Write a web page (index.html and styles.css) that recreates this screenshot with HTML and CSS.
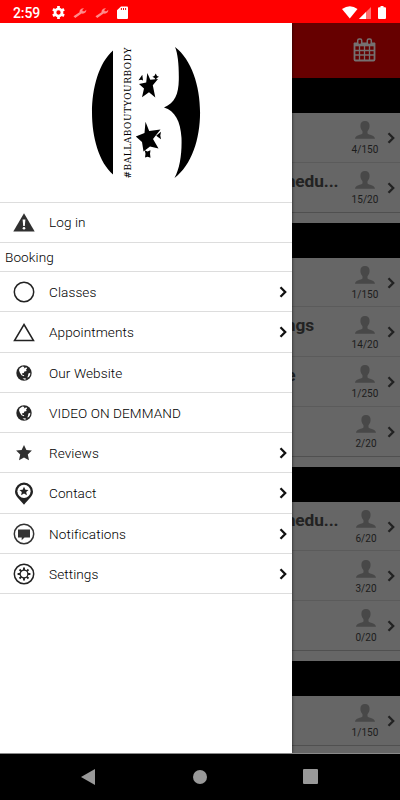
FILE: index.html
```html
<!DOCTYPE html>
<html lang="en">
<head>
<meta charset="utf-8">
<title>Booking menu</title>
<link rel="stylesheet" href="styles.css">
</head>
<body>
<svg class="defs" width="0" height="0" aria-hidden="true">
  <symbol id="chev" viewBox="0 0 8 12"><path d="M1.500 1.300 6.200 6 1.500 10.700" fill="none" stroke="currentColor" stroke-width="2.300"/></symbol>
  <symbol id="person" viewBox="0 0 20 18"><path d="M10 0C7 0 5.400 1.800 5.400 4.800c0 2 .8 4 2.100 5.400v2.200C6.500 14 .3 13.600 0 17.800h20c-.3-4.200-6.500-3.800-7.500-5.400v-2.200c1.300-1.400 2.100-3.400 2.100-5.400C14.600 1.800 13 0 10 0Z" fill="currentColor"/></symbol>
  <symbol id="star" viewBox="0 0 16 16"><path d="m8 0 2.400 5 5.500.6-4.100 3.800 1.200 5.900L8 12.500l-5 2.800 1.200-5.900L.1 5.600 5.600 5Z" fill="#303030"/></symbol>
  <symbol id="globe" viewBox="0 0 16 16"><circle cx="8" cy="8" r="7.700" fill="#252525"/><path d="M3.500 3.400 6.400 1.600l2 .3-.6 1.500 2.700-1.200.6 1.400-1.200 1.100.9 1.300-2.400.6-.6 1.500-2 .4.6 1.200 1.800.5-.2 1-2.500-1L3.800 7.500 3 5.200ZM12.400 8.400l1.900-.6-.2 2.200-1.300 1.900-1.500.5.7-1.600ZM6.500 13.500l2.500-.3 1.400.7-1.600.8Z" fill="#fff"/></symbol>
  <symbol id="wrench" viewBox="0 0 14 12"><path d="M.5 9.300 6.500 5.200C6.200 2.800 8 1.100 11 1.200L9.300 2.900l.5 1.300 1.800.1 1.700-1.500c.2 2.600-1.800 4.300-4.700 3.800L2.200 11Z" fill="#ff8b8b"/></symbol>
</svg>
<div class="phone">
  <header class="status">
    <span class="clock">2:59</span>
    <svg class="s-gear" width="13" height="13" viewBox="0 0 13 13"><circle cx="6.500" cy="6.500" r="3.500" fill="none" stroke="#fff" stroke-width="2.700"/><path d="M6.500 0v2.500M6.500 10.500V13M.9 3.250l2.100 1.250M10 8.500l2.100 1.250M.9 9.750 3 8.500M10 4.500l2.100-1.250" stroke="#fff" stroke-width="2.700"/></svg>
    <svg class="s-wr" width="14" height="12"><use href="#wrench"/></svg>
    <svg class="s-wr" width="14" height="12"><use href="#wrench"/></svg>
    <svg class="s-sd" width="11" height="13" viewBox="0 0 11 13"><path d="M4 .4h6q1 0 1 1V12q0 1-1 1H1q-1 0-1-1V4.200Z" fill="#fff"/><path d="M4.400 2v2M6.500 2v2M8.600 2v2" stroke="#f00" stroke-width="1"/></svg>
    <svg class="s-wifi" width="16" height="13" viewBox="0 0 16 13"><path d="M0 3Q8-2.500 15.500 3L7.800 12.500Z" fill="#fff"/></svg>
    <svg class="s-cell" width="12" height="12" viewBox="0 0 12 12"><path d="M12 0v12H0Z" fill="#ff7070"/><path d="M7 5v7H0Z" fill="#fff"/></svg>
    <svg class="s-bat" width="8" height="13" viewBox="0 0 8 13"><path d="M2.500 0h3v1.300H7q1 0 1 1V12q0 1-1 1H1q-1 0-1-1V2.300q0-1 1-1h1.500Z" fill="#fff"/></svg>
  </header>
  <main class="stage">
    <section class="schedule">
      <div class="appbar">
        <svg width="23" height="24" viewBox="0 0 23 24"><path d="M1.500 6h20v15.500q0 1-1 1h-18q-1 0-1-1Z" fill="none" stroke="#757070" stroke-width="1.800"/><path d="M1 4.500h21v3.800H1Z" fill="#757070"/><path d="M2 12.500h19M2 17h19M6.500 8v14M11.500 8v14M16.500 8v14" stroke="#757070" stroke-width="1.300"/><rect x="4.700" y="1" width="4" height="5.500" rx="1.500" fill="#600" stroke="#757070" stroke-width="1.500"/><rect x="14.300" y="1" width="4" height="5.500" rx="1.500" fill="#600" stroke="#757070" stroke-width="1.500"/></svg>
      </div>
      <div class="day"></div>
      <div class="group">
        <div class="slot"><span class="name"></span><span class="count"><svg width="20" height="18"><use href="#person"/></svg>4/150</span><svg class="go" width="8" height="12"><use href="#chev"/></svg></div>
        <div class="slot"><span class="name">Schedu...</span><span class="count"><svg width="20" height="18"><use href="#person"/></svg>15/20</span><svg class="go" width="8" height="12"><use href="#chev"/></svg></div>
      </div>
      <div class="day"></div>
      <div class="group">
        <div class="slot"><span class="name"></span><span class="count"><svg width="20" height="18"><use href="#person"/></svg>1/150</span><svg class="go" width="8" height="12"><use href="#chev"/></svg></div>
        <div class="slot"><span class="name n2">ngs</span><span class="count"><svg width="20" height="18"><use href="#person"/></svg>14/20</span><svg class="go" width="8" height="12"><use href="#chev"/></svg></div>
        <div class="slot"><span class="name n3">e</span><span class="count"><svg width="20" height="18"><use href="#person"/></svg>1/250</span><svg class="go" width="8" height="12"><use href="#chev"/></svg></div>
        <div class="slot short"><span class="name"></span><span class="count"><svg width="20" height="18"><use href="#person"/></svg>2/20</span><svg class="go" width="8" height="12"><use href="#chev"/></svg></div>
      </div>
      <div class="day"></div>
      <div class="group">
        <div class="slot short"><span class="name">Schedu...</span><span class="count"><svg width="20" height="18"><use href="#person"/></svg>6/20</span><svg class="go" width="8" height="12"><use href="#chev"/></svg></div>
        <div class="slot short"><span class="name"></span><span class="count"><svg width="20" height="18"><use href="#person"/></svg>3/20</span><svg class="go" width="8" height="12"><use href="#chev"/></svg></div>
        <div class="slot short"><span class="name"></span><span class="count"><svg width="20" height="18"><use href="#person"/></svg>0/20</span><svg class="go" width="8" height="12"><use href="#chev"/></svg></div>
      </div>
      <div class="day"></div>
      <div class="group">
        <div class="slot"><span class="name"></span><span class="count"><svg width="20" height="18"><use href="#person"/></svg>1/150</span><svg class="go" width="8" height="12"><use href="#chev"/></svg></div>
      </div>
    </section>
    <nav class="drawer">
      <div class="brand">
        <svg width="112" height="136" viewBox="90 45 112 136">
          <path d="M113 50.500C85 75 85 150 113 174.500ZM175 47C208 72 209 152 174.500 178 180 168 182 153 181.500 138 180.500 121 175 111 164 107.500 175 103 178.500 94 178.800 80 179 66 178 54 175 47Z" fill="#000"/>
          <text transform="translate(130.500 178.500) rotate(-90)" textLength="131" lengthAdjust="spacing" class="tag">#BALLABOUTYOURBODY</text>
          <path d="m147.300 73 3 6.700 7.700-.8-5.200 6.300 2.500 12.300-6.300-5.200-7 5 2-8.800-5-4.500 7.200-1.500ZM145.500 121.700l3.700 9.300 11.300-1.500-7.500 9.500 5.500 9.500-8.500-2-6.500 5-1.500-9.500-6.200-5.500 8.700-3.500Z" fill="#000"/>
          <path d="M155.700 73.500q.6 2.600 3.300 3.300-2.700.8-3.300 3.300-.6-2.500-3.300-3.300 2.700-.7 3.300-3.300ZM142.300 74.800l.7 5.700-1.800-.8-2.700.6ZM161 131.700l-.7 3.700.7 3.800-4.800-3.400ZM144.700 150.300l2.800 1.200 3-1.200-.5 3.500.5 4-2.800-1-2.700.8.500-3.800Z" fill="#000"/>
        </svg>
      </div>
      <a class="item"><span class="ico"><svg width="22" height="19" viewBox="0 0 22 19"><path d="M11 .3 21.700 18.500H.3Z" fill="#303030"/><path d="M9.600 6.500h2.800l-.6 6.500h-1.600Z" fill="#fff"/><circle cx="11" cy="15.200" r="1.300" fill="#fff"/></svg></span>Log in</a>
      <h2 class="heading">Booking</h2>
      <a class="item"><span class="ico"><svg width="22" height="22" viewBox="0 0 22 22"><circle cx="11" cy="11" r="9.700" fill="none" stroke="#222" stroke-width="1.500"/></svg></span>Classes<svg class="go" width="8" height="12"><use href="#chev"/></svg></a>
      <a class="item"><span class="ico"><svg width="22" height="19" viewBox="0 0 22 19"><path d="M11 1.500 20.500 17.500h-19Z" fill="none" stroke="#222" stroke-width="1.500"/></svg></span>Appointments<svg class="go" width="8" height="12"><use href="#chev"/></svg></a>
      <a class="item"><span class="ico"><svg width="16" height="16"><use href="#globe"/></svg></span>Our Website</a>
      <a class="item"><span class="ico"><svg width="16" height="16"><use href="#globe"/></svg></span>VIDEO ON DEMMAND</a>
      <a class="item"><span class="ico"><svg width="16" height="16"><use href="#star"/></svg></span>Reviews<svg class="go" width="8" height="12"><use href="#chev"/></svg></a>
      <a class="item"><span class="ico"><svg width="20" height="23" viewBox="0 0 20 23"><path d="M10 .5A9 9 0 0 0 1 9.500C1 14.500 5.500 17 10 22.700 14.500 17 19 14.500 19 9.500A9 9 0 0 0 10 .5Z" fill="#222"/><circle cx="10" cy="9.300" r="6.600" fill="#fff"/><path d="m10 4.800 1.400 2.900 3.100.2-2.300 2.200.7 3.200-2.900-1.700-2.900 1.700.7-3.200-2.300-2.200 3.100-.2Z" fill="#222"/></svg></span>Contact<svg class="go" width="8" height="12"><use href="#chev"/></svg></a>
      <a class="item"><span class="ico"><svg width="22" height="22" viewBox="0 0 22 22"><circle cx="11" cy="11" r="9.700" fill="none" stroke="#333" stroke-width="1.500"/><path d="M5 6.500h12v8h-5.500l-2.800 2.800v-2.800H5Z" fill="#333"/></svg></span>Notifications<svg class="go" width="8" height="12"><use href="#chev"/></svg></a>
      <a class="item"><span class="ico"><svg width="22" height="22" viewBox="0 0 22 22"><circle cx="11" cy="11" r="9.700" fill="none" stroke="#222" stroke-width="1.500"/><circle cx="11" cy="11" r="3.900" fill="none" stroke="#222" stroke-width="1.300"/><path d="M11 4.600v2.500M11 14.900v2.500M4.600 11h2.500M14.900 11h2.500M6.500 6.500l1.700 1.700M13.800 13.800l1.700 1.700M6.500 15.500l1.700-1.700M13.800 8.200l1.700-1.700" stroke="#222" stroke-width="1.900"/></svg></span>Settings<svg class="go" width="8" height="12"><use href="#chev"/></svg></a>
    </nav>
  </main>
  <footer class="keys">
    <svg width="14" height="16" viewBox="0 0 14 16"><path d="M14 0v16L0 8Z" fill="#999"/></svg>
    <svg class="home" width="14" height="14" viewBox="0 0 14 14"><circle cx="7" cy="7" r="7" fill="#999"/></svg>
    <svg width="15" height="15" viewBox="0 0 15 15"><rect width="15" height="15" rx="1" fill="#999"/></svg>
  </footer>
</div>
</body>
</html>
```
FILE: styles.css
```css
* { box-sizing: border-box; }
body { margin: 0; font-family: Roboto, "Liberation Sans", sans-serif; }
svg { display: block; flex: none; }
.defs { position: absolute; }
.phone { display: flex; flex-direction: column; width: 400px; height: 800px; overflow: hidden; background: #000; }

.status { display: flex; align-items: center; height: 23px; padding: 2px 14px 0 13px; background: #f00; color: #fff; flex: none; }
.clock { width: 38.5px; font-size: 14px; font-weight: 500; line-height: 20px; letter-spacing: -.1px; }
.s-wr, .s-sd { margin-left: 8px; }
.s-wifi { margin-left: auto; }
.s-cell { margin-left: 1px; margin-top: 1px; }
.s-bat { margin-left: 7px; }

.stage { position: relative; height: 730.5px; overflow: hidden; flex: none; background: #666; border-bottom: 1px solid #8a8a8a; }
.appbar { height: 55px; padding: 15px 24px 0 0; display: flex; justify-content: flex-end; background: #600; }
.day { height: 35px; background: #000; }
.group { padding-bottom: 10px; }
.slot { display: flex; height: 49.75px; padding-right: 5px; border-bottom: 1px solid #5b5b5b; align-items: flex-start; }
.slot:last-child { border-bottom: 1px solid #505050; }
.name { width: 338.5px; padding-top: 8px; font-size: 17.3px; line-height: 20px; font-weight: 700; letter-spacing: -.1px; color: #222; text-align: right; flex: none; }
.n2 { width: 314px; }
.n3 { width: 295.5px; }
.count { margin-left: auto; width: 26px; margin-right: 9px; display: flex; flex-direction: column; align-items: center; font-size: 10px; line-height: 12px; color: #1c1c1c; gap: 5px; padding-top: 8.3px; letter-spacing: .05px; white-space: nowrap; }
.count svg { color: #484848; }
.short .count { margin-right: 8px; }
.slot .go { color: #222; margin-top: 19px; }

.drawer { position: absolute; top: 0; left: 0; width: 292px; height: 730px; background: #fff; box-shadow: 0 0 3px rgba(0, 0, 0, .7); }
.brand { height: 179.5px; padding: 22px 0 0 90px; border-bottom: 1px solid #ddd; }
.tag { font-family: "DejaVu Serif", serif; font-size: 9px; fill: #000; }
.item { display: flex; align-items: center; height: 40.3px; padding: .6px 5px 0 0; border-bottom: 1px solid #ddd; font-size: 13.6px; color: #000; font-weight: 300; letter-spacing: .08px; }
.item .go { margin-left: auto; color: #111; }
.ico { width: 49px; padding-right: 1px; display: flex; justify-content: center; flex: none; }
.heading { margin: 0; height: 29.2px; padding-left: 5px; line-height: 28.6px; font-size: 13.6px; font-weight: 300; letter-spacing: .08px; border-bottom: 1px solid #ddd; }

.keys { display: flex; align-items: center; flex: 1; padding: 0 82px 0 81px; justify-content: space-between; background: #000; }
.home { margin-left: 1px; }
```
